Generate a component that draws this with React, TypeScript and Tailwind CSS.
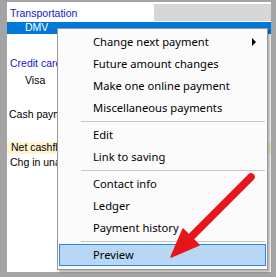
import React from 'react';

type Item = { label: string; sub?: boolean; active?: boolean } | 'sep';

const items: Item[] = [
  { label: 'Change next payment', sub: true },
  { label: 'Future amount changes' },
  { label: 'Make one online payment' },
  { label: 'Miscellaneous payments' },
  'sep',
  { label: 'Edit' },
  { label: 'Link to saving' },
  'sep',
  { label: 'Contact info' },
  { label: 'Ledger' },
  { label: 'Payment history' },
  'sep',
  { label: 'Preview', active: true },
];

const ContextMenu: React.FC = () => (
  <div className="absolute left-[50px] top-[26px] w-[211px] h-[242px] bg-[#fbfbfb] border border-[#979797] shadow-[2px_2px_2px_rgba(0,0,0,0.3)] py-[2px] px-px font-['Noto_Sans',sans-serif] text-[11.2px] text-black">
    {items.map((it, i) =>
      it === 'sep' ? (
        <div key={i} className="h-[5px] flex items-center pl-[22px] pr-px">
          <div className="h-px w-full bg-[#c6c6c6]" />
        </div>
      ) : (
        <div
          key={i}
          className={`h-[22px] flex items-center pl-[33px] pr-[7px] border ${
            it.active ? 'bg-[#b7d7f3] border-[#2a86de]' : 'border-transparent'
          }`}
        >
          <span className="flex-1 leading-none">{it.label}</span>
          {it.sub && (
            <svg width="5" height="8" viewBox="0 0 5 8" className="mr-[1px]">
              <path d="M0 0 L4 4 L0 8 Z" fill="#000" />
            </svg>
          )}
        </div>
      )
    )}
  </div>
);

const Arrow: React.FC = () => (
  <svg className="absolute left-0 top-0 pointer-events-none" width="276" height="277" viewBox="0 0 276 277">
    <line x1="251" y1="177" x2="192" y2="236" stroke="#e8141c" strokeWidth="7.5" strokeLinecap="round" />
    <path d="M171 257 L183 229 L199 245 Z" fill="#e8141c" stroke="#e8141c" strokeWidth="1.5" strokeLinejoin="round" />
  </svg>
);

export default function App() {
  return (
    <div className="relative w-[276px] h-[277px] bg-[#a4a4a4] pl-[7px] pt-[2px] pr-[5px] pb-[5px] overflow-hidden">
      <div className="relative h-full bg-white font-['Liberation_Sans',sans-serif] text-[10.5px] text-black">
        <div className="flex h-[20px]">
          <div className="w-[147px] pl-[3px] pt-[3px] flex items-center text-[#1616cc]">Transportation</div>
          <div className="flex-1 mt-[2px] mb-px bg-[#d6d6d6]" />
        </div>
        <div className="h-[12px] bg-[#0078d7] text-white pl-[18px] flex items-center">DMV</div>
        <div className="h-[21px]" />
        <div className="h-[17px] pl-[3px] flex items-center text-[#1616cc]">Credit card</div>
        <div className="h-[18px] pl-[18px] flex items-center">Visa</div>
        <div className="h-[17px]" />
        <div className="h-[16px] pl-[2px] flex items-center">Cash payments</div>
        <div className="h-[19px]" />
        <div className="h-[12px] pl-[4px] bg-[#fff4d2] flex items-center">Net cashflow</div>
        <div className="h-[18px] pl-[3px] flex items-center">Chg in unallocated</div>
        <ContextMenu />
      </div>
      <Arrow />
    </div>
  );
}
